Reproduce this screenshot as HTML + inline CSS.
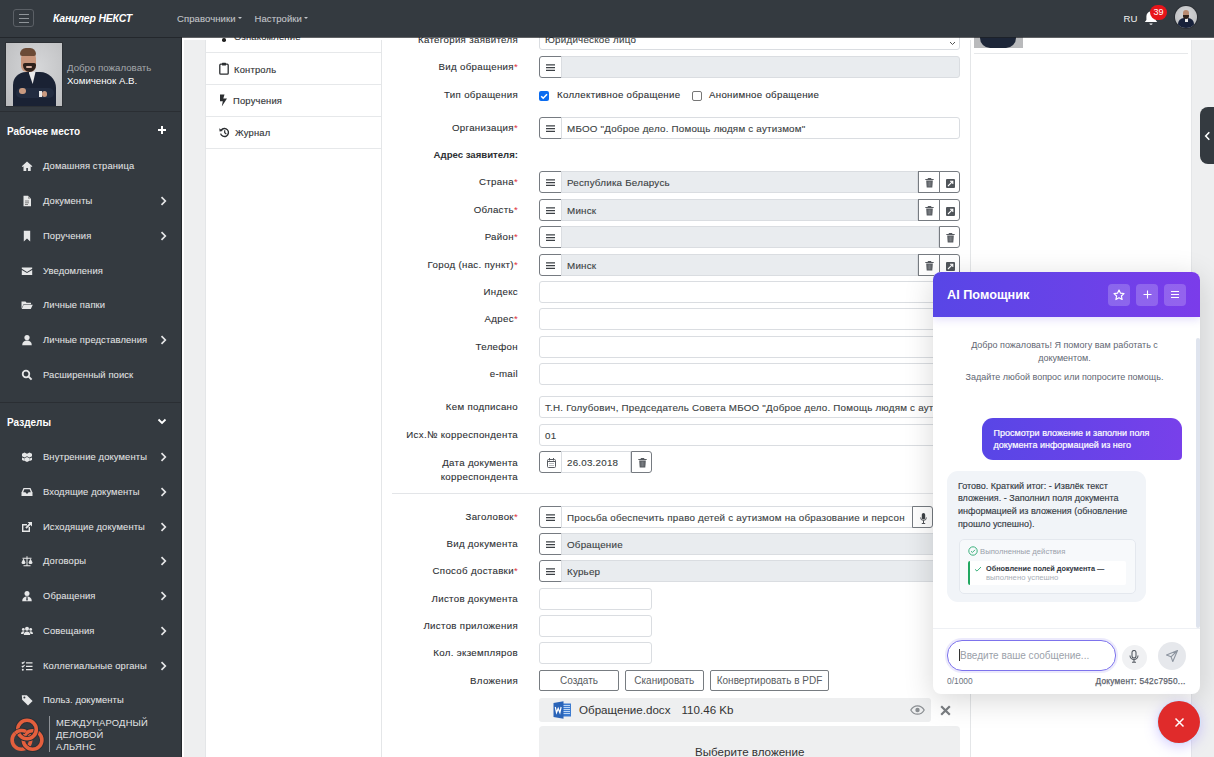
<!DOCTYPE html>
<html><head><meta charset="utf-8">
<style>
*{box-sizing:border-box;margin:0;padding:0}
html,body{width:1214px;height:757px;overflow:hidden;background:#fff;font-family:"Liberation Sans",sans-serif;color:#212529}
#nav{position:absolute;left:0;top:0;width:1214px;height:37px;background:#343a40;z-index:5;box-shadow:0 1px 0 rgba(28,31,36,0.7)}
#side{position:absolute;left:0;top:37px;width:182px;height:720px;background:#343a40;z-index:4;border-right:1px solid #23272b}
#gap{position:absolute;left:182px;top:40px;width:23px;height:717px;background:#eeeff0;border-left:2px solid #fff}
#tabs{position:absolute;left:205px;top:40px;width:177px;height:717px;background:#fff;border-left:1px solid #e4e6e8;border-right:1px solid #e4e6e8}
#form{position:absolute;left:382px;top:37px;width:588px;height:720px;background:#fff}
#rcol{position:absolute;left:970px;top:40px;width:222px;height:717px;background:#fff;border-left:1px solid #e4e6e8;border-right:1px solid #e4e6e8}
#rgap{position:absolute;left:1192px;top:40px;width:22px;height:717px;background:#eeeff0}
.t{position:absolute;white-space:nowrap;line-height:12px}
.si{position:absolute;left:43px;font-size:9.4px;letter-spacing:0.12px;color:#e2e3e4;white-space:nowrap;line-height:12px;-webkit-text-stroke:0.05px #e2e3e4}
.ic{position:absolute;left:21px;width:12px;height:12px}
.chev{position:absolute;left:160px;width:7px;height:10px}
.hd{position:absolute;left:7px;font-size:10px;font-weight:700;color:#fff;line-height:12px;white-space:nowrap}
.sdiv{position:absolute;left:0;width:182px;height:1px;background:#2a2e33}
</style></head><body>
<div id="nav">
  <div style="position:absolute;left:13px;top:9px;width:21px;height:18px;border:1px solid #5b6066;border-radius:3px"></div>
  <div style="position:absolute;left:18.5px;top:13.5px;width:10px;height:1px;background:#8f9499;box-shadow:0 4px 0 #8f9499,0 8px 0 #8f9499"></div>
  <div class="t" style="left:53px;top:12px;font-size:10.5px;font-weight:700;font-style:italic;color:#fff;letter-spacing:-0.2px">Канцлер НЕКСТ</div>
  <div class="t" style="left:177px;top:12.5px;font-size:9.5px;letter-spacing:0.1px;color:#c2c5c9;-webkit-text-stroke:0.1px #c2c5c9">Справочники<span style="display:inline-block;margin-left:2.5px;vertical-align:2.5px;border-left:2.3px solid transparent;border-right:2.3px solid transparent;border-top:2.5px solid #c2c5c9"></span></div>
  <div class="t" style="left:254.5px;top:12.5px;font-size:9.5px;letter-spacing:0.1px;color:#c2c5c9;-webkit-text-stroke:0.1px #c2c5c9">Настройки<span style="display:inline-block;margin-left:2.5px;vertical-align:2.5px;border-left:2.3px solid transparent;border-right:2.3px solid transparent;border-top:2.5px solid #c2c5c9"></span></div>
  <div class="t" style="left:1123.5px;top:12.5px;font-size:9.6px;color:#f2f2f2">RU</div>
  <svg style="position:absolute;left:1143px;top:10px" width="16" height="17" viewBox="0 0 16 17"><path d="M8 1.5c-2.8 0-4.6 2.1-4.6 4.8v3.6L1.8 12h12.4l-1.6-2.1V6.3C12.6 3.6 10.8 1.5 8 1.5z" fill="#fff"/><path d="M6.3 13.5a1.8 1.8 0 0 0 3.4 0z" fill="#fff"/></svg>
  <div style="position:absolute;left:1150px;top:5px;width:17px;height:15px;border-radius:8px;background:#e8141a;color:#fff;font-size:9px;line-height:15px;text-align:center">39</div>
  <div style="position:absolute;left:1175px;top:6px;width:22px;height:22px;border-radius:50%;background:radial-gradient(circle at 50% 40%,#d7d8da,#b5b7b9);overflow:hidden;box-shadow:0 0 0 1px #2a2e33">
    <div style="position:absolute;left:3px;top:12px;width:16px;height:12px;border-radius:6px 6px 0 0;background:#17213a"></div>
    <div style="position:absolute;left:9.5px;top:12px;width:3px;height:4px;background:#e8e8e8"></div>
    <div style="position:absolute;left:8px;top:4px;width:6px;height:8px;border-radius:3px;background:#b88a70"></div>
    <div style="position:absolute;left:8px;top:9px;width:6px;height:3.5px;border-radius:0 0 3px 3px;background:#2e211b"></div>
  </div>
</div>
<div id="side">
  <!-- photo -->
  <div style="position:absolute;left:6px;top:6px;width:56px;height:63px;background:radial-gradient(ellipse at 55% 40%,#d6d7d9,#c3c4c6 70%,#b9babc);overflow:hidden;box-shadow:0 0 0 1px #2c3035">
    <div style="position:absolute;left:7px;top:29px;width:43px;height:40px;border-radius:13px 16px 0 0;background:#1a2234"></div>
    <div style="position:absolute;left:22.5px;top:29px;width:7px;height:12px;background:#eaeaeb;clip-path:polygon(0 0,100% 0,60% 100%)"></div>
    <div style="position:absolute;left:10px;top:45px;width:38px;height:10px;border-radius:5px;background:#222c40"></div>
    <div style="position:absolute;left:12.5px;top:45px;width:7px;height:5.5px;border-radius:3px;background:#c99a80"></div>
    <div style="position:absolute;left:33px;top:48px;width:3px;height:6px;background:#e8e8e8"></div>
    <div style="position:absolute;left:35.5px;top:48px;width:5.5px;height:6px;border-radius:3px;background:#c99a80"></div>
    <div style="position:absolute;left:14.5px;top:8px;width:15px;height:21px;border-radius:7px 7px 6px 6px;background:#c8957b"></div>
    <div style="position:absolute;left:14px;top:5px;width:16px;height:8px;border-radius:8px 8px 3px 3px;background:#6b4a36"></div>
    <div style="position:absolute;left:16.5px;top:20px;width:13px;height:9px;border-radius:2px 2px 7px 7px;background:#2e211b"></div>
    <div style="position:absolute;left:20px;top:23px;width:6px;height:2px;border-radius:1px;background:#d8b0a0"></div>
  </div>
  <div class="t" style="left:67px;top:25px;font-size:9.7px;color:#a4a8ac">Добро пожаловать</div>
  <div class="t" style="left:67px;top:38px;font-size:9.7px;color:#fff">Хомиченок А.В.</div>
  <div class="sdiv" style="top:74px"></div>
  <div class="hd" style="top:88.5px">Рабочее место</div>
  <div style="position:absolute;left:158px;top:92px;width:8px;height:2px;background:#fff"></div>
  <div style="position:absolute;left:161px;top:89px;width:2px;height:8px;background:#fff"></div>
  <!-- items -->
  <svg class="ic" style="top:122.5px" viewBox="0 0 12 12"><path d="M6 1.5L0.8 6.2l0.8 0.9 0.9-.8V11h2.8V8h1.6v3h2.8V6.3l.9.8.8-.9z" fill="#e6e7e8"/></svg><div class="si" style="top:122.5px">Домашняя страница</div><svg class="ic" style="top:158.0px" viewBox="0 0 12 12"><path d="M2.5 0.8h4.5l3 3v7.4h-7.5z" fill="#e6e7e8"/><path d="M7 0.8v3h3" fill="#999" /><path d="M4 6h4M4 7.8h4M4 9.5h3" stroke="#555" stroke-width=".7"/></svg><div class="si" style="top:158.0px">Документы</div><div style="position:absolute;left:160px;top:159.0px;width:7px;height:10px"><svg width="7" height="10" style="display:block" viewBox="0 0 7 10"><path d="M1.5 1.2L5.3 5 1.5 8.8" stroke="#e6e7e8" stroke-width="1.7" fill="none"/></svg></div><svg class="ic" style="top:192.7px" viewBox="0 0 12 12"><path d="M2.8 0.8h6.4v10.6L6 8.5l-3.2 2.9z" fill="#e6e7e8"/></svg><div class="si" style="top:192.7px">Поручения</div><div style="position:absolute;left:160px;top:193.7px;width:7px;height:10px"><svg width="7" height="10" style="display:block" viewBox="0 0 7 10"><path d="M1.5 1.2L5.3 5 1.5 8.8" stroke="#e6e7e8" stroke-width="1.7" fill="none"/></svg></div><svg class="ic" style="top:227.5px" viewBox="0 0 12 12"><path d="M0.8 2.5h10.4v1.2L6 7 0.8 3.7z" fill="#e6e7e8"/><path d="M0.8 4.9L6 8.1l5.2-3.2V10H0.8z" fill="#e6e7e8"/></svg><div class="si" style="top:227.5px">Уведомления</div><svg class="ic" style="top:262.0px" viewBox="0 0 12 12"><path d="M0.5 2.5h4l1 1.2h4.5v1.5H2.5L0.5 9.5z" fill="#e6e7e8"/><path d="M2.6 5.8h9.2L9.8 10H0.7z" fill="#e6e7e8"/></svg><div class="si" style="top:262.0px">Личные папки</div><svg class="ic" style="top:297.0px" viewBox="0 0 12 12"><circle cx="6" cy="3.6" r="2.6" fill="#e6e7e8"/><path d="M1.2 11.2c0-3 2-4.6 4.8-4.6s4.8 1.6 4.8 4.6z" fill="#e6e7e8"/></svg><div class="si" style="top:297.0px">Личные представления</div><div style="position:absolute;left:160px;top:298.0px;width:7px;height:10px"><svg width="7" height="10" style="display:block" viewBox="0 0 7 10"><path d="M1.5 1.2L5.3 5 1.5 8.8" stroke="#e6e7e8" stroke-width="1.7" fill="none"/></svg></div><svg class="ic" style="top:331.5px" viewBox="0 0 12 12"><circle cx="5" cy="5" r="3.3" stroke="#e6e7e8" stroke-width="1.8" fill="none"/><path d="M7.4 7.4l3.2 3.2" stroke="#e6e7e8" stroke-width="2"/></svg><div class="si" style="top:331.5px">Расширенный поиск</div>
  <div class="sdiv" style="top:365px"></div>
  <div class="hd" style="top:379.5px">Разделы</div>
  <svg style="position:absolute;left:157px;top:381px" width="10" height="7" viewBox="0 0 10 7"><path d="M1.5 1.5L5 5l3.5-3.5" stroke="#fff" stroke-width="1.8" fill="none"/></svg>
  <svg class="ic" style="top:414.0px" viewBox="0 0 12 12"><path d="M3.5 1.5l2.5 1.2v2.6L3.5 6.5 1 5.3V2.7z M8.5 1.5l2.5 1.2v2.6L8.5 6.5 6 5.3V2.7z M6 6l2.5 1.2v2.6L6 11 3.5 9.8V7.2z M1 6.5l2.3 1.1v2.4L1 8.9z M11 6.5v2.4l-2.3 1.1V7.6z" fill="#e6e7e8"/></svg><div class="si" style="top:414.0px">Внутренние документы</div><div style="position:absolute;left:160px;top:415.0px;width:7px;height:10px"><svg width="7" height="10" style="display:block" viewBox="0 0 7 10"><path d="M1.5 1.2L5.3 5 1.5 8.8" stroke="#e6e7e8" stroke-width="1.7" fill="none"/></svg></div><svg class="ic" style="top:449.0px" viewBox="0 0 12 12"><path d="M2.5 2h7l2 4.5V10H0.5V6.5z" fill="#e6e7e8"/><path d="M2.2 6.3h2.3l.7 1.2h1.6l.7-1.2h2.3L8.7 3.2H3.3z" fill="#343a40"/></svg><div class="si" style="top:449.0px">Входящие документы</div><div style="position:absolute;left:160px;top:450.0px;width:7px;height:10px"><svg width="7" height="10" style="display:block" viewBox="0 0 7 10"><path d="M1.5 1.2L5.3 5 1.5 8.8" stroke="#e6e7e8" stroke-width="1.7" fill="none"/></svg></div><svg class="ic" style="top:483.5px" viewBox="0 0 12 12"><path d="M1 3h5v1.4H2.4v5.2h5.2V6H9v5H1z" fill="#e6e7e8"/><path d="M6.5 1h4.5v4.5L9.4 3.9 5.6 7.7 4.3 6.4l3.8-3.8z" fill="#e6e7e8"/></svg><div class="si" style="top:483.5px">Исходящие документы</div><div style="position:absolute;left:160px;top:484.5px;width:7px;height:10px"><svg width="7" height="10" style="display:block" viewBox="0 0 7 10"><path d="M1.5 1.2L5.3 5 1.5 8.8" stroke="#e6e7e8" stroke-width="1.7" fill="none"/></svg></div><svg class="ic" style="top:518.0px" viewBox="0 0 12 12"><path d="M5.5 1.2h1v9h3v1h-7v-1h3z M1.5 2.8h9v1h-9z" fill="#e6e7e8"/><path d="M0.5 7.5L2.5 3.5l2 4c0 1-1 1.6-2 1.6s-2-.6-2-1.6z M7.5 7.5l2-4 2 4c0 1-1 1.6-2 1.6s-2-.6-2-1.6z" fill="#e6e7e8"/></svg><div class="si" style="top:518.0px">Договоры</div><div style="position:absolute;left:160px;top:519.0px;width:7px;height:10px"><svg width="7" height="10" style="display:block" viewBox="0 0 7 10"><path d="M1.5 1.2L5.3 5 1.5 8.8" stroke="#e6e7e8" stroke-width="1.7" fill="none"/></svg></div><svg class="ic" style="top:553.0px" viewBox="0 0 12 12"><circle cx="6" cy="3.4" r="2.5" fill="#e6e7e8"/><path d="M1.2 11.2c0-3 2-4.6 4.8-4.6s4.8 1.6 4.8 4.6z" fill="#e6e7e8"/><path d="M5.5 7h1l.3 3-.8.8-.8-.8z" fill="#343a40"/></svg><div class="si" style="top:553.0px">Обращения</div><div style="position:absolute;left:160px;top:554.0px;width:7px;height:10px"><svg width="7" height="10" style="display:block" viewBox="0 0 7 10"><path d="M1.5 1.2L5.3 5 1.5 8.8" stroke="#e6e7e8" stroke-width="1.7" fill="none"/></svg></div><svg class="ic" style="top:588.0px" viewBox="0 0 12 12"><circle cx="6" cy="3.8" r="2" fill="#e6e7e8"/><circle cx="2.3" cy="4.4" r="1.4" fill="#e6e7e8"/><circle cx="9.7" cy="4.4" r="1.4" fill="#e6e7e8"/><path d="M2.8 10c0-2.2 1.3-3.6 3.2-3.6s3.2 1.4 3.2 3.6z M0 9c0-1.6.9-2.8 2.3-2.8.6 0 1 .2 1.3.5C2.9 7.4 2.5 8.2 2.5 9z M12 9c0-1.6-.9-2.8-2.3-2.8-.6 0-1 .2-1.3.5.7.7 1.1 1.5 1.1 2.3z" fill="#e6e7e8"/></svg><div class="si" style="top:588.0px">Совещания</div><div style="position:absolute;left:160px;top:589.0px;width:7px;height:10px"><svg width="7" height="10" style="display:block" viewBox="0 0 7 10"><path d="M1.5 1.2L5.3 5 1.5 8.8" stroke="#e6e7e8" stroke-width="1.7" fill="none"/></svg></div><svg class="ic" style="top:622.5px" viewBox="0 0 12 12"><path d="M0.8 2.5l1 1 1.8-1.8 M0.8 6l1 1 1.8-1.8" stroke="#e6e7e8" stroke-width="1.1" fill="none"/><circle cx="1.8" cy="9.7" r="1" fill="#e6e7e8"/><path d="M5 2.8h6.5M5 6.3h6.5M5 9.7h6.5" stroke="#e6e7e8" stroke-width="1.3"/></svg><div class="si" style="top:622.5px">Коллегиальные органы</div><div style="position:absolute;left:160px;top:623.5px;width:7px;height:10px"><svg width="7" height="10" style="display:block" viewBox="0 0 7 10"><path d="M1.5 1.2L5.3 5 1.5 8.8" stroke="#e6e7e8" stroke-width="1.7" fill="none"/></svg></div><svg class="ic" style="top:657.0px" viewBox="0 0 12 12"><path d="M0.8 1.2h5l5.8 5.8-4.6 4.6L1.2 5.8z" fill="#e6e7e8"/><circle cx="3.4" cy="3.6" r="1" fill="#343a40"/></svg><div class="si" style="top:657.0px">Польз. документы</div>
  <!-- logo -->
  <svg style="position:absolute;left:5px;top:675px" width="45" height="45" viewBox="0 0 45 45">
    <g fill="none" stroke-width="3.6">
      <circle cx="16.4" cy="28" r="9.3" stroke="#e45f3d"/>
      <circle cx="27.6" cy="28" r="9.3" stroke="#2b2f35" stroke-width="5.4"/><circle cx="27.6" cy="28" r="9.3" stroke="#e45f3d"/>
      <circle cx="22" cy="17.5" r="9.3" stroke="#2b2f35" stroke-width="5.4"/><circle cx="22" cy="17.5" r="9.3" stroke="#e45f3d"/>
      <path d="M10.2 21.2A9.3 9.3 0 0 1 21 19.5" stroke="#2b2f35" stroke-width="5.4"/><path d="M10.2 21.2A9.3 9.3 0 0 1 21 19.5" stroke="#e45f3d"/>
    </g>
  </svg>
  <div style="position:absolute;left:49px;top:679px;width:1px;height:36px;background:#8d9196"></div>
  <div class="t" style="left:56px;top:680px;font-size:9.4px;letter-spacing:0.2px;color:#e3e4e5;line-height:12px">МЕЖДУНАРОДНЫЙ<br>ДЕЛОВОЙ<br>АЛЬЯНС</div>
</div>
<div id="gap"></div>
<div id="tabs"></div>
<div id="form"></div>
<div id="rcol"></div>
<div id="rgap"></div>
<div style="position:absolute;left:206px;top:52px;width:175px;height:1px;background:#e6e8ea"></div>
<div style="position:absolute;left:206px;top:84px;width:175px;height:1px;background:#e6e8ea"></div>
<div style="position:absolute;left:206px;top:116px;width:175px;height:1px;background:#e6e8ea"></div>
<div style="position:absolute;left:206px;top:148px;width:175px;height:1px;background:#e6e8ea"></div>
<div class="t" style="left:234px;top:31px;font-size:9.4px;letter-spacing:0.2px;color:#34373a;-webkit-text-stroke:0.15px #34373a">Ознакомление</div>
<div style="position:absolute;left:222px;top:38px;width:3.5px;height:3.5px;border-radius:50%;background:#222"></div>
<svg style="position:absolute;left:219px;top:62px" width="10" height="13" viewBox="0 0 10 13"><rect x="0.8" y="2.2" width="8.4" height="10" rx="1" fill="none" stroke="#2b2e31" stroke-width="1.3"/><rect x="3" y="0.8" width="4" height="2.6" rx=".5" fill="#2b2e31"/></svg>
<div class="t" style="left:234px;top:63.5px;font-size:9.4px;letter-spacing:0.2px;color:#34373a;-webkit-text-stroke:0.15px #34373a">Контроль</div>
<svg style="position:absolute;left:218.5px;top:94px" width="9" height="13" viewBox="0 0 9 13"><path d="M1 0.5h4.5L4.3 4.6H8L2.8 12.5l1-5.2H1z" fill="#2b2e31"/></svg>
<div class="t" style="left:233px;top:95px;font-size:9.4px;letter-spacing:0.2px;color:#34373a;-webkit-text-stroke:0.15px #34373a">Поручения</div>
<svg style="position:absolute;left:219px;top:127px" width="11" height="11" viewBox="0 0 11 11"><path d="M2.2 3.2A4 4 0 1 1 1.6 6.6" fill="none" stroke="#2b2e31" stroke-width="1.4"/><path d="M0.3 1.2L0.6 4.6 3.9 4z" fill="#2b2e31"/><path d="M5.7 3.2v2.6l1.6 1.2" fill="none" stroke="#2b2e31" stroke-width="1.2"/></svg>
<div class="t" style="left:235px;top:127px;font-size:9.4px;letter-spacing:0.2px;color:#34373a;-webkit-text-stroke:0.15px #34373a">Журнал</div>

<style>
.lb{position:absolute;right:696px;white-space:nowrap;line-height:12px;font-size:9.7px;letter-spacing:0.32px;color:#2d3033;text-align:right;-webkit-text-stroke:0.1px #2d3033}
.in{position:absolute;height:22px;border:1px solid #dadde1;font-size:9.8px;letter-spacing:0.22px;color:#3b3f43;-webkit-text-stroke:0.12px #3b3f43;line-height:22px;padding-left:5px;white-space:nowrap;overflow:hidden}
.bt{position:absolute;height:22px;border:1px solid #767b81;background:#fff}
.tx{position:absolute;white-space:nowrap;line-height:12px;font-size:9.7px;letter-spacing:0.3px;color:#2d3033;-webkit-text-stroke:0.1px #2d3033}
.ob{position:absolute;height:21px;border:1px solid #777c81;border-radius:2px;background:#fff;font-size:10px;color:#575b60;line-height:19px;text-align:center;white-space:nowrap}
</style><div class="lb" style="top:34.0px;">Категория заявителя</div>
<div class="in" style="left:539px;top:28px;width:421px;background:#fff;border-radius:3px">Юридическое лицо</div>
<svg style="position:absolute;left:949px;top:32px" width="7" height="15" viewBox="0 0 7 15"><path d="M1 5L3.5 2.5 6 5M1 10l2.5 2.5L6 10" stroke="#555" stroke-width="1" fill="none"/></svg>
<div class="lb" style="top:61.0px;">Вид обращения<span style="color:#e0303c;-webkit-text-stroke:0">*</span></div>
<div class="bt" style="left:539px;top:56px;width:23px;border-radius:3px 0 0 3px"><svg width="9" height="7" viewBox="0 0 9 7" style="position:absolute;left:6px;top:6.8px"><path d="M0 .8h9M0 3.6h9M0 6.4h9" stroke="#3d4146" stroke-width="1.3"/></svg></div>
<div class="in" style="left:561px;top:56px;width:399px;background:#e9ecef;border-radius:0 3px 3px 0"></div>
<div class="lb" style="top:89.0px;">Тип обращения</div>
<div style="position:absolute;left:539px;top:90.5px;width:10px;height:10px;border-radius:2px;background:#0b6cf0"><svg width="10" height="10" viewBox="0 0 10 10" style="position:absolute;left:0;top:0"><path d="M2.2 5.2l2 2 3.8-4" stroke="#fff" stroke-width="1.6" fill="none"/></svg></div>
<div class="tx" style="left:557px;top:89px">Коллективное обращение</div>
<div style="position:absolute;left:692px;top:90.5px;width:10px;height:10px;border-radius:2px;border:1px solid #767676;background:#fff"></div>
<div class="tx" style="left:709px;top:89px">Анонимное обращение</div>
<div class="lb" style="top:122.0px;">Организация<span style="color:#e0303c;-webkit-text-stroke:0">*</span></div>
<div class="bt" style="left:539px;top:117px;width:23px;border-radius:3px 0 0 3px"><svg width="9" height="7" viewBox="0 0 9 7" style="position:absolute;left:6px;top:6.8px"><path d="M0 .8h9M0 3.6h9M0 6.4h9" stroke="#3d4146" stroke-width="1.3"/></svg></div>
<div class="in" style="left:561px;top:117px;width:399px;background:#fff;border-radius:0 3px 3px 0">МБОО "Доброе дело. Помощь людям с аутизмом"</div>
<div class="lb" style="top:149.0px;font-weight:700;font-size:9.6px;letter-spacing:0;-webkit-text-stroke:0;">Адрес заявителя:</div>
<div class="lb" style="top:176.0px;">Страна<span style="color:#e0303c;-webkit-text-stroke:0">*</span></div>
<div class="bt" style="left:539px;top:171px;width:23px;border-radius:3px 0 0 3px"><svg width="9" height="7" viewBox="0 0 9 7" style="position:absolute;left:6px;top:6.8px"><path d="M0 .8h9M0 3.6h9M0 6.4h9" stroke="#3d4146" stroke-width="1.3"/></svg></div>
<div class="in" style="left:561px;top:171px;width:357px;background:#e9ecef;border-radius:0">Республика Беларусь</div>
<div class="bt" style="left:918px;top:171px;width:22px;border-radius:0"><svg width="9" height="10" viewBox="0 0 9 10" style="position:absolute;left:6px;top:6px"><path d="M0.3 1.5h8.4M3 1.5V.5h3v1" stroke="#575b60" stroke-width="1"/><path d="M1.2 2.5h6.6l-.5 7H1.7z" fill="#575b60"/><path d="M3.2 3.5v5M4.5 3.5v5M5.8 3.5v5" stroke="#9a9ea2" stroke-width=".5"/></svg></div>
<div class="bt" style="left:939px;top:171px;width:21px;border-radius:0 3px 3px 0"><svg width="9" height="9" viewBox="0 0 9 9" style="position:absolute;left:6px;top:6.5px"><rect x="0" y="0" width="9" height="9" rx="1" fill="#50555a"/><path d="M2 7l4.2-4.2M4 2.2h2.8V5" stroke="#fff" stroke-width="1.1" fill="none"/></svg></div>
<div class="lb" style="top:204.0px;">Область<span style="color:#e0303c;-webkit-text-stroke:0">*</span></div>
<div class="bt" style="left:539px;top:199px;width:23px;border-radius:3px 0 0 3px"><svg width="9" height="7" viewBox="0 0 9 7" style="position:absolute;left:6px;top:6.8px"><path d="M0 .8h9M0 3.6h9M0 6.4h9" stroke="#3d4146" stroke-width="1.3"/></svg></div>
<div class="in" style="left:561px;top:199px;width:357px;background:#e9ecef;border-radius:0">Минск</div>
<div class="bt" style="left:918px;top:199px;width:22px;border-radius:0"><svg width="9" height="10" viewBox="0 0 9 10" style="position:absolute;left:6px;top:6px"><path d="M0.3 1.5h8.4M3 1.5V.5h3v1" stroke="#575b60" stroke-width="1"/><path d="M1.2 2.5h6.6l-.5 7H1.7z" fill="#575b60"/><path d="M3.2 3.5v5M4.5 3.5v5M5.8 3.5v5" stroke="#9a9ea2" stroke-width=".5"/></svg></div>
<div class="bt" style="left:939px;top:199px;width:21px;border-radius:0 3px 3px 0"><svg width="9" height="9" viewBox="0 0 9 9" style="position:absolute;left:6px;top:6.5px"><rect x="0" y="0" width="9" height="9" rx="1" fill="#50555a"/><path d="M2 7l4.2-4.2M4 2.2h2.8V5" stroke="#fff" stroke-width="1.1" fill="none"/></svg></div>
<div class="lb" style="top:231.0px;">Район<span style="color:#e0303c;-webkit-text-stroke:0">*</span></div>
<div class="bt" style="left:539px;top:226px;width:23px;border-radius:3px 0 0 3px"><svg width="9" height="7" viewBox="0 0 9 7" style="position:absolute;left:6px;top:6.8px"><path d="M0 .8h9M0 3.6h9M0 6.4h9" stroke="#3d4146" stroke-width="1.3"/></svg></div>
<div class="in" style="left:561px;top:226px;width:378px;background:#e9ecef;border-radius:0"></div>
<div class="bt" style="left:939px;top:226px;width:21px;border-radius:0 3px 3px 0"><svg width="9" height="10" viewBox="0 0 9 10" style="position:absolute;left:6px;top:6px"><path d="M0.3 1.5h8.4M3 1.5V.5h3v1" stroke="#575b60" stroke-width="1"/><path d="M1.2 2.5h6.6l-.5 7H1.7z" fill="#575b60"/><path d="M3.2 3.5v5M4.5 3.5v5M5.8 3.5v5" stroke="#9a9ea2" stroke-width=".5"/></svg></div>
<div class="lb" style="top:259.0px;">Город (нас. пункт)<span style="color:#e0303c;-webkit-text-stroke:0">*</span></div>
<div class="bt" style="left:539px;top:254px;width:23px;border-radius:3px 0 0 3px"><svg width="9" height="7" viewBox="0 0 9 7" style="position:absolute;left:6px;top:6.8px"><path d="M0 .8h9M0 3.6h9M0 6.4h9" stroke="#3d4146" stroke-width="1.3"/></svg></div>
<div class="in" style="left:561px;top:254px;width:357px;background:#e9ecef;border-radius:0">Минск</div>
<div class="bt" style="left:918px;top:254px;width:22px;border-radius:0"><svg width="9" height="10" viewBox="0 0 9 10" style="position:absolute;left:6px;top:6px"><path d="M0.3 1.5h8.4M3 1.5V.5h3v1" stroke="#575b60" stroke-width="1"/><path d="M1.2 2.5h6.6l-.5 7H1.7z" fill="#575b60"/><path d="M3.2 3.5v5M4.5 3.5v5M5.8 3.5v5" stroke="#9a9ea2" stroke-width=".5"/></svg></div>
<div class="bt" style="left:939px;top:254px;width:21px;border-radius:0 3px 3px 0"><svg width="9" height="9" viewBox="0 0 9 9" style="position:absolute;left:6px;top:6.5px"><rect x="0" y="0" width="9" height="9" rx="1" fill="#50555a"/><path d="M2 7l4.2-4.2M4 2.2h2.8V5" stroke="#fff" stroke-width="1.1" fill="none"/></svg></div>
<div class="lb" style="top:286.0px;">Индекс</div>
<div class="in" style="left:539px;top:281px;width:421px;background:#fff;border-radius:3px"></div>
<div class="lb" style="top:313.0px;">Адрес<span style="color:#e0303c;-webkit-text-stroke:0">*</span></div>
<div class="in" style="left:539px;top:308px;width:421px;background:#fff;border-radius:3px"></div>
<div class="lb" style="top:341.0px;">Телефон</div>
<div class="in" style="left:539px;top:336px;width:421px;background:#fff;border-radius:3px"></div>
<div class="lb" style="top:368.0px;">e-mail</div>
<div class="in" style="left:539px;top:363px;width:421px;background:#fff;border-radius:3px"></div>
<div class="lb" style="top:401.0px;">Кем подписано</div>
<div class="in" style="left:539px;top:396px;width:421px;background:#fff;border-radius:3px">Т.Н. Голубович, Председатель Совета МБОО "Доброе дело. Помощь людям с аутизмом"</div>
<div class="lb" style="top:429.0px;">Исх.№ корреспондента</div>
<div class="in" style="left:539px;top:424px;width:421px;background:#fff;border-radius:3px">01</div>
<div class="lb" style="top:456px;line-height:14px">Дата документа<br>корреспондента</div>
<div class="bt" style="left:539px;top:451px;width:23px;border-radius:3px 0 0 3px"><svg width="9" height="10" viewBox="0 0 9 10" style="position:absolute;left:6.5px;top:6px"><rect x=".5" y="1.5" width="8" height="8" rx="1" fill="none" stroke="#575b60" stroke-width="1"/><path d="M.5 3.5h8M2.5 0v2.5M6.5 0v2.5" stroke="#575b60" stroke-width="1"/><path d="M2 5.5h5M2 7.5h5" stroke="#9a9ea2" stroke-width=".7"/></svg></div>
<div class="in" style="left:561px;top:451px;width:70px;background:#fff;border-radius:0">26.03.2018</div>
<div class="bt" style="left:631px;top:451px;width:21px;border-radius:0 3px 3px 0"><svg width="9" height="10" viewBox="0 0 9 10" style="position:absolute;left:6px;top:6px"><path d="M0.3 1.5h8.4M3 1.5V.5h3v1" stroke="#575b60" stroke-width="1"/><path d="M1.2 2.5h6.6l-.5 7H1.7z" fill="#575b60"/><path d="M3.2 3.5v5M4.5 3.5v5M5.8 3.5v5" stroke="#9a9ea2" stroke-width=".5"/></svg></div>
<div style="position:absolute;left:392px;top:493px;width:568px;height:1px;background:#e3e5e8"></div>
<div class="lb" style="top:511.0px;">Заголовок<span style="color:#e0303c;-webkit-text-stroke:0">*</span></div>
<div class="bt" style="left:539px;top:506px;width:23px;border-radius:3px 0 0 3px"><svg width="9" height="7" viewBox="0 0 9 7" style="position:absolute;left:6px;top:6.8px"><path d="M0 .8h9M0 3.6h9M0 6.4h9" stroke="#3d4146" stroke-width="1.3"/></svg></div>
<div class="in" style="left:561px;top:506px;width:352px;background:#fff;border-radius:0">Просьба обеспечить право детей с аутизмом на образование и персон</div>
<div class="bt" style="left:912px;top:506px;width:21px;border-radius:0 3px 3px 0"><svg width="7" height="11" viewBox="0 0 7 11" style="position:absolute;left:7px;top:5.5px"><rect x="1.8" y="0" width="3.4" height="6.5" rx="1.7" fill="#3d4146"/><path d="M.6 4.5a2.9 2.9 0 0 0 5.8 0M3.5 7.5v2.5M1.8 10.5h3.4" stroke="#3d4146" stroke-width=".9" fill="none"/></svg></div>
<div class="lb" style="top:538.0px;">Вид документа</div>
<div class="bt" style="left:539px;top:533px;width:23px;border-radius:3px 0 0 3px"><svg width="9" height="7" viewBox="0 0 9 7" style="position:absolute;left:6px;top:6.8px"><path d="M0 .8h9M0 3.6h9M0 6.4h9" stroke="#3d4146" stroke-width="1.3"/></svg></div>
<div class="in" style="left:561px;top:533px;width:399px;background:#e9ecef;border-radius:0 3px 3px 0">Обращение</div>
<div class="lb" style="top:565.0px;">Способ доставки<span style="color:#e0303c;-webkit-text-stroke:0">*</span></div>
<div class="bt" style="left:539px;top:560px;width:23px;border-radius:3px 0 0 3px"><svg width="9" height="7" viewBox="0 0 9 7" style="position:absolute;left:6px;top:6.8px"><path d="M0 .8h9M0 3.6h9M0 6.4h9" stroke="#3d4146" stroke-width="1.3"/></svg></div>
<div class="in" style="left:561px;top:560px;width:399px;background:#e9ecef;border-radius:0 3px 3px 0">Курьер</div>
<div class="lb" style="top:593.0px;">Листов документа</div>
<div class="in" style="left:539px;top:588px;width:113px;background:#fff;border-radius:3px"></div>
<div class="lb" style="top:620.0px;">Листов приложения</div>
<div class="in" style="left:539px;top:615px;width:113px;background:#fff;border-radius:3px"></div>
<div class="lb" style="top:647.0px;">Кол. экземпляров</div>
<div class="in" style="left:539px;top:642px;width:113px;background:#fff;border-radius:3px"></div>
<div class="lb" style="top:675.0px;">Вложения</div>
<div class="ob" style="left:539px;top:670px;width:80px">Создать</div>
<div class="ob" style="left:624.5px;top:670px;width:79.5px">Сканировать</div>
<div class="ob" style="left:710px;top:670px;width:119px">Конвертировать в PDF</div>
<div style="position:absolute;left:539px;top:698px;width:392px;height:24px;background:#eeeff0;border-radius:3px"></div>
<svg style="position:absolute;left:553px;top:701px" width="19" height="18" viewBox="0 0 19 18"><rect x="9" y="2.5" width="9" height="13" fill="#3d7bd0"/><path d="M10 4.5h7M10 6.5h7M10 8.5h7M10 10.5h7M10 12.5h7" stroke="#bcd6f5" stroke-width="1"/><path d="M0.5 2L10.5 0.3V17.7L0.5 16z" fill="#2a64b8"/><path d="M2.3 6l1.2 5.6 1.7-4.2 1.7 4.2L8.1 6" stroke="#fff" stroke-width="1.2" fill="none"/></svg>
<div class="t" style="left:579px;top:703.5px;font-size:11.6px;color:#333">Обращение.docx</div>
<div class="t" style="left:681.5px;top:703.5px;font-size:11.6px;color:#333">110.46 Kb</div>
<svg style="position:absolute;left:910px;top:705px" width="15" height="10" viewBox="0 0 15 10"><path d="M.8 5C2.5 2 5 .8 7.5.8S12.5 2 14.2 5C12.5 8 10 9.2 7.5 9.2S2.5 8 .8 5z" fill="none" stroke="#8a8e92" stroke-width="1.2"/><circle cx="7.5" cy="5" r="2.2" fill="#8a8e92"/></svg>
<svg style="position:absolute;left:940px;top:705px" width="11" height="11" viewBox="0 0 11 11"><path d="M1.2 1.2l8.6 8.6M9.8 1.2l-8.6 8.6" stroke="#7a7e82" stroke-width="2.2"/></svg>
<div style="position:absolute;left:539px;top:726px;width:421px;height:40px;background:#eeeff0;border-radius:4px"></div>
<div class="t" style="left:695px;top:746px;font-size:11.6px;color:#333">Выберите вложение</div>
<div style="position:absolute;left:974px;top:30px;width:49px;height:18px;background:#b9babc;overflow:hidden"><div style="position:absolute;left:6px;top:-10px;width:36px;height:28px;border-radius:10px;background:#1d2638"></div></div>
<div style="position:absolute;left:974px;top:53px;width:214px;height:1px;background:#e6e8ea"></div>
<div style="position:absolute;left:1200px;top:107px;width:20px;height:57px;border-radius:8px 0 0 8px;background:#343a40"></div>
<svg style="position:absolute;left:1204px;top:131px" width="7" height="10" viewBox="0 0 7 10"><path d="M5.3 1.2L1.7 5l3.6 3.8" stroke="#fff" stroke-width="1.6" fill="none"/></svg>

<style>
.ai{position:absolute;white-space:nowrap;line-height:12px}
</style>
<div style="position:absolute;left:933px;top:272px;width:267px;height:422px;border-radius:8px;background:#fff;box-shadow:0 6px 30px rgba(0,0,0,0.16);overflow:hidden">
  <div style="position:absolute;left:0;top:0;width:267px;height:45px;background:linear-gradient(90deg,#5846e6 0%,#6a42e8 55%,#7b3cea 100%);box-shadow:0 3px 8px rgba(110,90,240,0.18)"></div>
  <div class="ai" style="left:14px;top:16px;font-size:12.7px;font-weight:700;color:#fff;line-height:14px">AI Помощник</div>
  <div style="position:absolute;left:175px;top:11.5px;width:22px;height:22px;border-radius:4px;background:rgba(255,255,255,0.2)"></div>
  <svg style="position:absolute;left:180px;top:16.5px" width="12" height="12" viewBox="0 0 12 12"><path d="M6 1l1.5 3.2 3.5.4-2.6 2.4.7 3.5L6 8.7 2.9 10.5l.7-3.5L1 4.6l3.5-.4z" fill="none" stroke="#fff" stroke-width="1.2" stroke-linejoin="round"/></svg>
  <div style="position:absolute;left:203px;top:11.5px;width:22px;height:22px;border-radius:4px;background:rgba(255,255,255,0.2)"></div>
  <svg style="position:absolute;left:209px;top:17px" width="11" height="11" viewBox="0 0 11 11"><path d="M5.5 1.5v8M1.5 5.5h8" stroke="#fff" stroke-width="1.1"/></svg>
  <div style="position:absolute;left:231px;top:11.5px;width:22px;height:22px;border-radius:4px;background:rgba(255,255,255,0.2)"></div>
  <svg style="position:absolute;left:237px;top:17px" width="10" height="11" viewBox="0 0 10 11"><path d="M1 2.5h8M1 5.5h8M1 8.5h8" stroke="#fff" stroke-width="1"/></svg>
  <!-- scrollbar -->
  <div style="position:absolute;left:263px;top:66px;width:4px;height:290px;background:#dfe4ee;border-radius:2px"></div>
  <div class="ai" style="left:0;width:263px;text-align:center;top:66.5px;font-size:9px;color:#5f6672;line-height:13px;white-space:normal">Добро пожаловать! Я помогу вам работать с<br>документом.</div>
  <div class="ai" style="left:0;width:263px;text-align:center;top:99px;font-size:9px;color:#5f6672">Задайте любой вопрос или попросите помощь.</div>
  <!-- user bubble -->
  <div style="position:absolute;left:49px;top:145.5px;width:200px;height:42px;border-radius:11px 11px 4px 11px;background:linear-gradient(90deg,#5846e6,#7840ea)"></div>
  <div class="ai" style="left:60.5px;top:154.5px;font-size:9px;color:#fff;line-height:12.3px;-webkit-text-stroke:0.2px #fff">Просмотри вложение и заполни поля<br>документа информацией из него</div>
  <!-- bot bubble -->
  <div style="position:absolute;left:14px;top:199px;width:199px;height:131px;border-radius:11px;background:#f1f4f8"></div>
  <div class="ai" style="left:25px;top:207.5px;font-size:9px;color:#353b45;line-height:12.7px;-webkit-text-stroke:0.15px #353b45">Готово. Краткий итог: - Извлёк текст<br>вложения. - Заполнил поля документа<br>информацией из вложения (обновление<br>прошло успешно).</div>
  <div style="position:absolute;left:25.5px;top:266.5px;width:177px;height:55px;border-radius:5px;background:#f7f9fb;border:1px solid #e4e8ee"></div>
  <svg style="position:absolute;left:34.5px;top:274px" width="10" height="10" viewBox="0 0 10 10"><circle cx="5" cy="5" r="4.2" fill="none" stroke="#3fb27f" stroke-width="1"/><path d="M3 5.2l1.4 1.3L7 3.8" stroke="#3fb27f" stroke-width="1" fill="none"/></svg>
  <div class="ai" style="left:47px;top:274.5px;font-size:7.7px;color:#9aa1ab;line-height:10px">Выполненные действия</div>
  <div style="position:absolute;left:34.5px;top:289px;width:158px;height:24px;background:#fff;border-left:2px solid #22a861;border-radius:2px"></div>
  <svg style="position:absolute;left:41px;top:293px" width="8" height="8" viewBox="0 0 8 8"><path d="M1 4.3l2 1.8L7 2" stroke="#3fb27f" stroke-width="1" fill="none"/></svg>
  <div class="ai" style="left:53px;top:292px;font-size:7.3px;font-weight:700;color:#2f3540;line-height:10px">Обновление полей документа —</div>
  <div class="ai" style="left:53px;top:301px;font-size:7.7px;color:#a9afb8;line-height:10px">выполнено успешно</div>
  <!-- input area -->
  <div style="position:absolute;left:0;top:356px;width:267px;height:1px;background:#eef0f4"></div>
  <div style="position:absolute;left:14px;top:367.5px;width:169px;height:31px;border-radius:15px;border:1.5px solid #7d73ec;background:#fff;box-shadow:0 0 0 2px rgba(125,115,236,0.15)"></div>
  <div style="position:absolute;left:26px;top:377px;width:1px;height:12px;background:#333"></div>
  <div class="ai" style="left:27px;top:378px;font-size:10px;color:#9ba1aa">Введите ваше сообщение...</div>
  <div style="position:absolute;left:188.5px;top:372.5px;width:25px;height:25px;border-radius:50%;background:#f0f1f3"></div>
  <svg style="position:absolute;left:196px;top:378px" width="10" height="13" viewBox="0 0 10 13"><rect x="3" y=".5" width="4" height="7.5" rx="2" fill="none" stroke="#555b63" stroke-width="1.1"/><path d="M1 5.5a4 4 0 0 0 8 0M5 9.5V12M3 12.3h4" stroke="#555b63" stroke-width="1.1" fill="none"/></svg>
  <div style="position:absolute;left:225px;top:370px;width:28px;height:28px;border-radius:50%;background:#e6e8ec"></div>
  <svg style="position:absolute;left:232px;top:377px" width="14" height="14" viewBox="0 0 14 14"><path d="M12.5 1.5L1.5 6l4.5 1.8L7.8 12.5z M6 7.8l6.5-6.3" fill="none" stroke="#8d95a0" stroke-width="1.1" stroke-linejoin="round"/></svg>
  <div class="ai" style="left:14px;top:404px;font-size:8.4px;color:#6b7280;line-height:10px">0/1000</div>
  <div class="ai" style="right:14.5px;top:404px;font-size:8.3px;letter-spacing:0.25px;color:#5d636c;-webkit-text-stroke:0.25px #5d636c;line-height:10px">Документ: 542c7950...</div>
</div>
<div style="position:absolute;left:1158px;top:701px;width:42px;height:42px;border-radius:50%;background:#e02b2b;box-shadow:0 0 0 1px rgba(205,228,255,0.9),0 3px 14px rgba(120,100,255,0.35)"></div>
<svg style="position:absolute;left:1173.5px;top:716.5px" width="11" height="11" viewBox="0 0 11 11"><path d="M1.5 1.5l8 8M9.5 1.5l-8 8" stroke="#fff" stroke-width="1.5"/></svg>

</body></html>
